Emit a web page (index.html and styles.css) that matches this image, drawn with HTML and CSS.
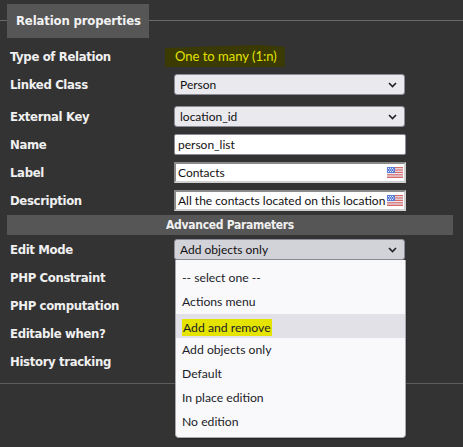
FILE: index.html
```html
<!DOCTYPE html>
<html>
<head>
<meta charset="utf-8">
<link rel="stylesheet" href="styles.css">
</head>
<body>
<div class="panel">
  <div class="legend-line"><div class="legend">Relation properties</div></div>
  <div class="rows">
    <div class="row"><div class="lbl">Type of Relation</div><div class="fld"><span class="mark">One to many (1:n)</span></div></div>
    <div class="row"><div class="lbl">Linked Class</div><div class="fld"><div class="select">Person<svg class="chev" width="9" height="6" viewBox="0 0 9 6"><path d="M1 1 L4.5 4.5 L8 1" fill="none" stroke="#222" stroke-width="1.6"/></svg></div></div></div>
    <div class="row gap"><div class="lbl">External Key</div><div class="fld"><div class="select">location_id<svg class="chev" width="9" height="6" viewBox="0 0 9 6"><path d="M1 1 L4.5 4.5 L8 1" fill="none" stroke="#222" stroke-width="1.6"/></svg></div></div></div>
    <div class="row"><div class="lbl">Name</div><div class="fld"><div class="input">person_list</div></div></div>
    <div class="row"><div class="lbl">Label</div><div class="fld"><div class="input inset">Contacts<svg class="flag" width="16" height="11" viewBox="0 0 16 11"><rect width="16" height="11" fill="#e8e8ee"/><rect y="0" width="16" height="1.2" fill="#d86a6a"/><rect y="2.4" width="16" height="1.2" fill="#d86a6a"/><rect y="4.8" width="16" height="1.2" fill="#d86a6a"/><rect y="7.2" width="16" height="1.2" fill="#d86a6a"/><rect y="9.6" width="16" height="1.4" fill="#d86a6a"/><rect width="8" height="6" fill="#5b7fd6"/><g fill="#dfe6ff"><rect x="1" y="1" width="1" height="1"/><rect x="3" y="1" width="1" height="1"/><rect x="5" y="1" width="1" height="1"/><rect x="2" y="2.5" width="1" height="1"/><rect x="4" y="2.5" width="1" height="1"/><rect x="6" y="2.5" width="1" height="1"/><rect x="1" y="4" width="1" height="1"/><rect x="3" y="4" width="1" height="1"/><rect x="5" y="4" width="1" height="1"/></g></svg></div></div></div>
    <div class="row"><div class="lbl">Description</div><div class="fld"><div class="input inset">All the contacts located on this location<svg class="flag" width="16" height="11" viewBox="0 0 16 11"><rect width="16" height="11" fill="#e8e8ee"/><rect y="0" width="16" height="1.2" fill="#d86a6a"/><rect y="2.4" width="16" height="1.2" fill="#d86a6a"/><rect y="4.8" width="16" height="1.2" fill="#d86a6a"/><rect y="7.2" width="16" height="1.2" fill="#d86a6a"/><rect y="9.6" width="16" height="1.4" fill="#d86a6a"/><rect width="8" height="6" fill="#5b7fd6"/><g fill="#dfe6ff"><rect x="1" y="1" width="1" height="1"/><rect x="3" y="1" width="1" height="1"/><rect x="5" y="1" width="1" height="1"/><rect x="2" y="2.5" width="1" height="1"/><rect x="4" y="2.5" width="1" height="1"/><rect x="6" y="2.5" width="1" height="1"/><rect x="1" y="4" width="1" height="1"/><rect x="3" y="4" width="1" height="1"/><rect x="5" y="4" width="1" height="1"/></g></svg></div></div></div>
    <div class="section">Advanced Parameters</div>
    <div class="row"><div class="lbl">Edit Mode</div><div class="fld dd-host"><div class="select open">Add objects only<svg class="chev" width="9" height="6" viewBox="0 0 9 6"><path d="M1 1 L4.5 4.5 L8 1" fill="none" stroke="#222" stroke-width="1.6"/></svg></div>
      <div class="dropdown">
        <div class="opt">-- select one --</div>
        <div class="opt">Actions menu</div>
        <div class="opt hover"><span class="hl">Add and remove</span></div>
        <div class="opt">Add objects only</div>
        <div class="opt">Default</div>
        <div class="opt">In place edition</div>
        <div class="opt">No edition</div>
      </div>
    </div></div>
    <div class="row"><div class="lbl">PHP Constraint</div><div class="fld"></div></div>
    <div class="row"><div class="lbl">PHP computation</div><div class="fld"></div></div>
    <div class="row"><div class="lbl">Editable when?</div><div class="fld"></div></div>
    <div class="row"><div class="lbl">History tracking</div><div class="fld"></div></div>
  </div>
  <div class="bottom-line"></div>
</div>
</body>
</html>
```
FILE: styles.css
```css
html, body {
  margin: 0;
  padding: 0;
  background: #333333;
  width: 463px;
  height: 447px;
  overflow: hidden;
}
.panel {
  padding-top: 4px;
  font-family: "DejaVu Sans Condensed", "DejaVu Sans", sans-serif;
  font-stretch: condensed;
}
.legend-line {
  display: flex;
  padding-left: 7px;
  background: linear-gradient(#333 0, #333 16.5px, #6a6a6a 16.5px, #6a6a6a 17.5px, #333 17.5px);
}
.legend {
  background: #565656;
  color: #f2f2f2;
  font-weight: bold;
  font-size: 13px;
  letter-spacing: -0.15px;
  height: 34px;
  line-height: 34px;
  padding: 0 8px 0 9px;
}
.rows {
  margin-top: 4px;
  padding: 0 10px 0 7px;
}
.row {
  display: flex;
  align-items: center;
  height: 28px;
}
.row.gap {
  margin-top: 4px;
}
.lbl {
  width: 167px;
  padding-left: 3px;
  box-sizing: border-box;
  color: #f0f0f0;
  font-weight: bold;
  font-size: 13px;
  letter-spacing: -0.35px;
}
.fld {
  width: 232px;
  font-family: Lato, "Open Sans", sans-serif;
  font-stretch: normal;
  font-size: 12px;
  color: #111;
}
.mark {
  display: inline-block;
  margin-left: -9px;
  padding: 3px 8px 3px 10px;
  background: #3a3a02;
  color: #e2e200;
  font-size: 13px;
  clip-path: polygon(0 14%, 78% 0, 100% 8%, 100% 100%, 0 100%);
}
.select {
  position: relative;
  height: 21px;
  width: 231px;
  box-sizing: border-box;
  border: 1px solid #8d8d99;
  border-radius: 3px;
  background: #e9e9ee;
  padding-left: 5px;
  line-height: 19px;
}
.select.open {
  background: #d2d2d9;
}
.chev {
  position: absolute;
  right: 7px;
  top: 7px;
}
.input {
  position: relative;
  height: 21px;
  width: 232px;
  box-sizing: border-box;
  border: 1px solid #8d8d99;
  border-radius: 2px;
  background: #fff;
  padding-left: 3px;
  line-height: 19px;
}
.input.inset {
  border-radius: 0;
  border-top: 2px solid #8a8a8a;
  border-left: 2px solid #8a8a8a;
  border-right: 2px solid #d0d0d0;
  border-bottom: 2px solid #d0d0d0;
  line-height: 17px;
  padding-left: 2px;
  white-space: nowrap;
  overflow: hidden;
}
.flag {
  position: absolute;
  right: 1px;
  top: 3px;
}
.section {
  margin-top: 1px;
  height: 20px;
  line-height: 20px;
  background: #565656;
  color: #f0f0f0;
  font-weight: bold;
  font-size: 12px;
  letter-spacing: -0.3px;
  text-align: center;
}
.dd-host {
  position: relative;
}
.dropdown {
  position: absolute;
  left: 1px;
  top: 21px;
  width: 231px;
  box-sizing: border-box;
  background: #f9f9fb;
  border: 1px solid #a9a9b0;
  border-top: none;
  border-radius: 0 0 4px 4px;
  padding: 6px 0 3px;
  box-shadow: 0 1px 2px rgba(0,0,0,0.3);
  z-index: 5;
}
.opt {
  height: 24px;
  line-height: 24px;
  padding-left: 6px;
  font-size: 12.2px;
  color: #1c1c28;
}
.opt.hover {
  background: #e1e1e7;
}
.hl {
  display: inline-block;
  background: #e4e400;
  line-height: 17px;
  padding: 0 1px;
  margin-top: 5px;
  vertical-align: top;
}
.bottom-line {
  margin-top: 8px;
  height: 1px;
  background: #5e5e5e;
}
```
